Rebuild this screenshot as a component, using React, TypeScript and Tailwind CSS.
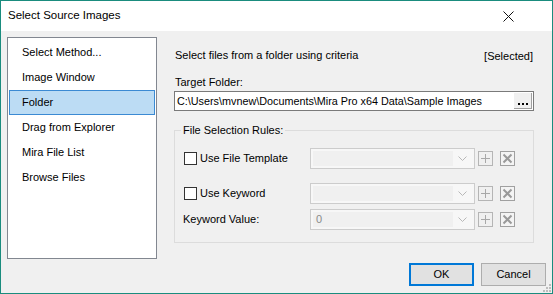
import React from 'react';

const methods = ['Select Method...', 'Image Window', 'Folder', 'Drag from Explorer', 'Mira File List', 'Browse Files'];

const Chevron = () => (
  <svg width="9" height="5" viewBox="0 0 9 5" className="shrink-0">
    <path d="M0.5 0.5 L4.5 4.5 L8.5 0.5" fill="none" stroke="#b8b8b8" strokeWidth="1" />
  </svg>
);

const Combo = ({ value }: { value?: string }) => (
  <div className="w-[165px] h-[21px] border border-[#cccccc] bg-[#f7f7f7] flex items-center p-[2px]">
    <div className="flex-1 h-full bg-[#f0f0f0] flex items-center pl-[3px] text-[#8a8a8a]">{value}</div>
    <div className="w-[19px] flex items-center justify-center">
      <Chevron />
    </div>
  </div>
);

const PlusBtn = () => (
  <svg width="15" height="15" viewBox="0 0 15 15" className="shrink-0">
    <rect x="0.5" y="0.5" width="14" height="14" fill="none" stroke="#b5b5b5" />
    <path d="M7.5 3 V12 M3 7.5 H12" stroke="#a8a8a8" strokeWidth="1" />
  </svg>
);

const DelBtn = () => (
  <svg width="15" height="15" viewBox="0 0 15 15" className="shrink-0">
    <rect x="0.5" y="0.5" width="14" height="14" fill="#f4f4f4" stroke="#a0a0a0" />
    <path d="M3.5 3.5 L11.5 11.5 M11.5 3.5 L3.5 11.5" stroke="#9a9a9a" strokeWidth="2" />
  </svg>
);

const CheckBox = () => <div className="w-[13px] h-[13px] border border-[#333333] bg-white shrink-0" />;

const RuleRow = ({ label, check, value, className }: { label: string; check?: boolean; value?: string; className?: string }) => (
  <div className={`flex items-center ${className ?? ''}`}>
    <div className="w-[126px] flex items-center">
      {check && <CheckBox />}
      <span className={check ? 'ml-[3px]' : '-ml-[1px]'}>{label}</span>
    </div>
    <Combo value={value} />
    <div className="ml-[3px]"><PlusBtn /></div>
    <div className="ml-[7px]"><DelBtn /></div>
  </div>
);

const App: React.FC = () => {
  return (
    <div
      className="w-[553px] h-[294px] border border-[#1a8c7e] flex flex-col text-[11px] text-black overflow-hidden"
      style={{ fontFamily: '"Segoe UI", "Liberation Sans", Arial, sans-serif' }}
    >
      {/* title bar */}
      <div className="h-[30px] bg-white flex items-center justify-between pl-[7px] pr-[38px]">
        <span className="text-[11.5px]">Select Source Images</span>
        <svg width="11" height="11" viewBox="0 0 11 11">
          <path d="M0.5 0.5 L10.5 10.5 M10.5 0.5 L0.5 10.5" stroke="#111" strokeWidth="1" />
        </svg>
      </div>

      {/* body */}
      <div className="flex-1 bg-[#f0f0f0] flex flex-col px-[6px] pt-[6px] relative">
        <div className="flex h-[222px]">
          {/* method list */}
          <div className="w-[150px] h-full border border-[#828790] bg-white pt-[2px] px-[1px]">
            {methods.map(m => (
              <div
                key={m}
                className={`h-[25px] flex items-center pl-[12px] border ${
                  m === 'Folder' ? 'bg-[#bcdcf4] border-[#3b8ad3]' : 'border-transparent'
                }`}
              >
                {m}
              </div>
            ))}
          </div>

          {/* folder panel */}
          <div className="w-[360px] ml-[17px] pt-[10px] flex flex-col">
            <div className="flex justify-between pl-[1px] pr-[1px] h-[16px] items-center">
              <span>Select files from a folder using criteria</span>
              <span className="mt-[3px]">[Selected]</span>
            </div>
            <div className="mt-[11px] h-[16px] flex items-center pl-[1px]">Target Folder:</div>
            <div className="mt-[1px] h-[20px] border border-[#7a7a7a] bg-white flex items-center pl-[2px] pr-[1px]">
              <span className="flex-1 text-[10.8px]">C:\Users\mvnew\Documents\Mira Pro x64 Data\Sample Images</span>
              <div className="w-[18px] h-[16px] bg-[#f0f0f0] border-r border-b border-[#a0a0a0] flex items-end justify-center gap-[2px] pb-[3px]">
                <span className="w-[2px] h-[2px] bg-black" />
                <span className="w-[2px] h-[2px] bg-black" />
                <span className="w-[2px] h-[2px] bg-black" />
              </div>
            </div>

            <div className="mt-[19px] relative border border-[#dcdcdc] h-[113px] pl-[9px] pt-[17px]">
              <span className="absolute -top-[8px] left-[6px] px-[2px] bg-[#f0f0f0] leading-[14px]">File Selection Rules:</span>
              <RuleRow label="Use File Template" check />
              <RuleRow label="Use Keyword" check className="mt-[14px]" />
              <RuleRow label="Keyword Value:" value="0" className="mt-[5px]" />
            </div>
          </div>
        </div>

        {/* buttons */}
        <div className="mt-[4px] flex justify-end gap-[7px]">
          <button className="w-[65px] h-[23px] border-2 border-[#0078d7] bg-[#e1e1e1]">OK</button>
          <button className="w-[65px] h-[23px] border border-[#adadad] bg-[#e1e1e1]">Cancel</button>
        </div>

        {/* size grip */}
        <svg width="8" height="8" viewBox="0 0 8 8" className="absolute right-[1px] bottom-[1px]">
          {[[6, 0], [6, 3], [3, 3], [6, 6], [3, 6], [0, 6]].map(([x, y]) => (
            <rect key={`${x}-${y}`} x={x} y={y} width="2" height="2" fill="#bdbdbd" />
          ))}
        </svg>
      </div>
    </div>
  );
};

export default App;
